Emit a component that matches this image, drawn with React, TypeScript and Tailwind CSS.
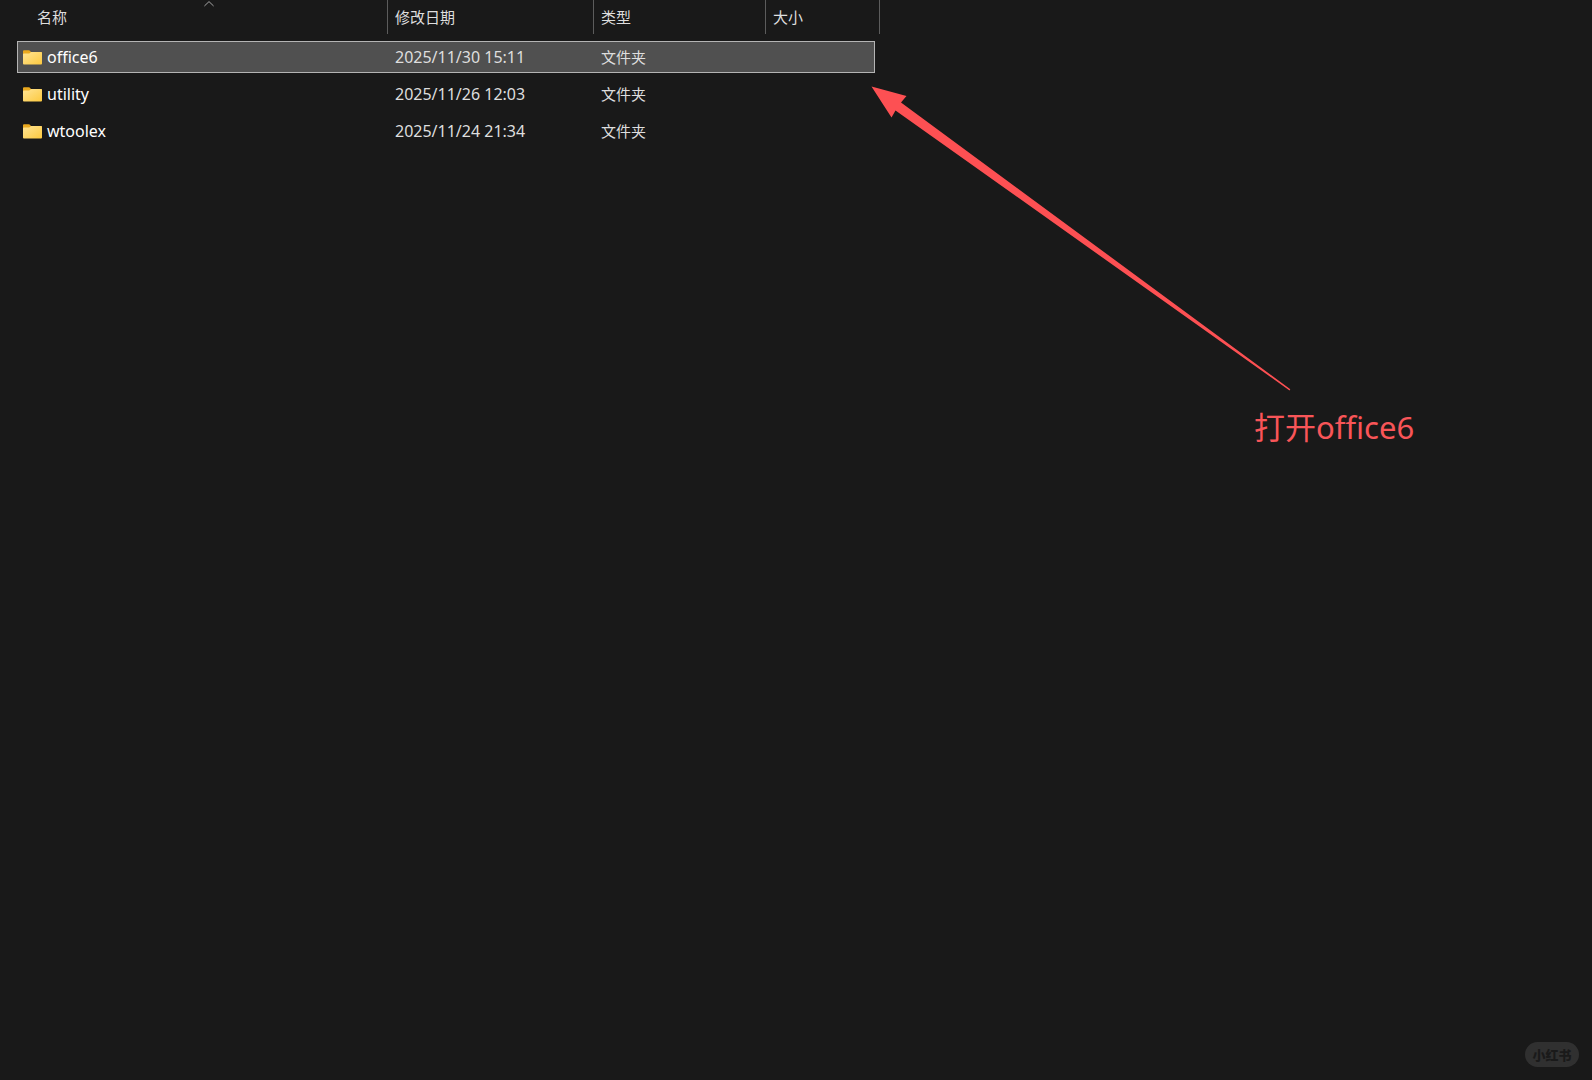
import { useState } from 'react'

const folders = [
  { name: 'office6', date: '2025/11/30 15:11', type: '文件夹' },
  { name: 'utility', date: '2025/11/26 12:03', type: '文件夹' },
  { name: 'wtoolex', date: '2025/11/24 21:34', type: '文件夹' },
]

function FolderIcon() {
  return (
    <svg viewBox="0 0 19 15" className="w-[19px] h-[15px] shrink-0" aria-hidden="true">
      <defs>
        <linearGradient id="folder" x1="0" y1="0" x2="1" y2="1">
          <stop offset="0" stopColor="#ffe494" />
          <stop offset="1" stopColor="#fcc93f" />
        </linearGradient>
      </defs>
      <path d="M0 1.2Q0 0.2 1 0.2H5.6Q6.2 0.2 6.6 0.6L8 2H18Q19 2 19 3V8H0Z" fill="#eaa91f" />
      <path d="M0 4.4Q0 3.6 0.9 3.6H5.6Q6.2 3.6 6.6 3.2L7.4 2.5Q7.8 2.1 8.4 2.1H18Q19 2.1 19 3V13.6Q19 14.5 18.1 14.5H0.9Q0 14.5 0 13.6Z" fill="url(#folder)" />
    </svg>
  )
}

export default function App() {
  const [selected, setSelected] = useState('office6')

  return (
    <main className="relative min-h-screen overflow-hidden bg-[#191919] text-[16px] leading-5 text-[#dedede] font-['Noto_Sans','Noto_Sans_CJK_SC',sans-serif]">
      <table className="block w-[880px] max-w-full">
        <thead className="block text-[15px]">
          <tr className="grid h-[34px] grid-cols-[388px_206px_172px_114px]">
            <th className="relative border-r border-[#5c5c5c] pl-[37px] pt-[7px] text-left font-normal">
              名称
              <svg viewBox="0 0 10 6" className="absolute left-[204px] top-px h-[6px] w-[10px]" aria-hidden="true">
                <path d="M0.4 5L5 0.6L9.6 5" fill="none" stroke="#a5a5a5" />
              </svg>
            </th>
            <th className="border-r border-[#5c5c5c] pl-[7px] pt-[7px] text-left font-normal">修改日期</th>
            <th className="border-r border-[#5c5c5c] pl-[7px] pt-[7px] text-left font-normal">类型</th>
            <th className="border-r border-[#5c5c5c] pl-[7px] pt-[7px] text-left font-normal">大小</th>
          </tr>
        </thead>
        <tbody className="mt-[7px] ml-[17px] mr-[5px] flex flex-col gap-[5px]">
          {folders.map((f) => (
            <tr
              key={f.name}
              onClick={() => setSelected(f.name)}
              className={
                'grid h-8 grid-cols-[370px_206px_172px_1fr] items-center border ' +
                (selected === f.name ? 'border-[#b4b4b4] bg-[#505050]' : 'border-transparent')
              }
            >
              <td className="flex items-center gap-[5px] pl-[5px] text-white">
                <FolderIcon />
                {f.name}
              </td>
              <td className="pl-[7px]">{f.date}</td>
              <td className="pl-[7px] text-[15px]">{f.type}</td>
              <td />
            </tr>
          ))}
        </tbody>
      </table>

      {/* 标注箭头 */}
      <svg viewBox="0 0 420 305" className="absolute left-[871px] top-[86px] h-[305px] w-[420px]" aria-hidden="true">
        <path d="M0.5 0.5L35.5 10L30 16.5L419.3 303.2L418.5 304.4L24.5 24.5L20.5 31.5Z" fill="#fd5053" />
      </svg>
      <p className="absolute left-[1254px] top-[405px] whitespace-nowrap text-[31px] leading-[44px] text-[#f85558]">打开office6</p>

      <div className="absolute bottom-[13px] right-[13px] flex h-[25px] w-[54px] items-center justify-center rounded-full bg-[#303030] text-[13px] font-black text-[#1a1a1a]">
        小红书
      </div>
    </main>
  )
}
